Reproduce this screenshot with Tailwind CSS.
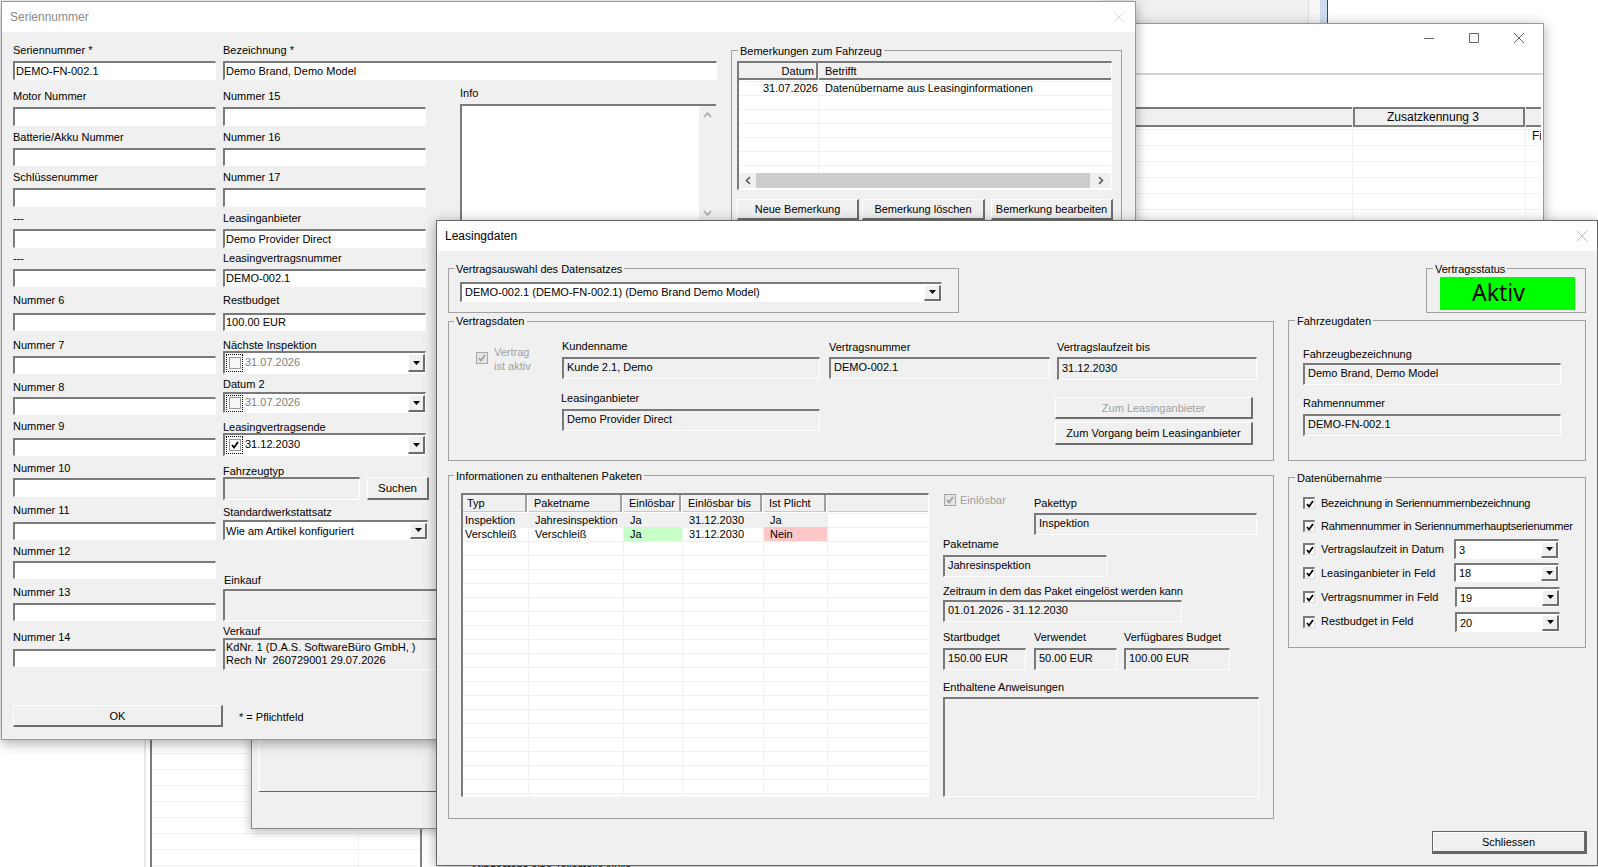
<!DOCTYPE html>
<html lang="de">
<head>
<meta charset="UTF-8">
<title>Leasingdaten</title>
<script src="https://cdn.jsdelivr.net/npm/@tailwindcss/browser@4"></script>
</head>
<body class="bg-white">
<div class="relative w-[1598px] h-[867px] overflow-hidden bg-white text-[11px] leading-[14px] text-black font-['Liberation_Sans',sans-serif]">

  <!-- main app behind everything -->
  <div class="absolute left-[144px] top-[700px] w-[278px] h-[167px] border-l-2 border-r-2 border-l-[#e8e8e8] border-r-[#808080] pl-[4px]">
    <div class="h-full border-l-2 border-[#7a7a7a] flex bg-[repeating-linear-gradient(to_bottom,transparent_0,transparent_5px,#f0f0f0_5px,#f0f0f0_6px,transparent_6px,transparent_16px)]">
      <div class="w-[207px] border-r border-[#f0f0f0]"></div>
    </div>
  </div>
  <div class="absolute left-[1100px] top-0 w-[228px] h-[30px] flex bg-[#f0f0f0] border-r border-[#444]">
    <div class="w-[209px] border-r border-[#ddd]"></div>
    <div class="w-[11px] bg-[#f6f6f6]"></div>
    <div class="w-[7px] bg-[#cfdcef]"></div>
  </div>
  <div class="absolute left-[472px] top-[864px] w-[170px] h-[3px] overflow-hidden whitespace-nowrap leading-[8px]">Mindestens eine Teilestelle Nulls</div>

  <!-- window behind, right -->
  <div class="absolute left-[1100px] top-[23px] w-[444px] h-[300px] bg-white border border-[#999] shadow-[0_2px_12px_rgba(0,0,0,0.3)]">
    <div class="h-[51px] border-b-2 border-[#d4d4d4] flex items-start justify-end gap-[35px] pr-[19px] pt-[9px]">
      <svg class="w-[10px] h-[10px]" viewBox="0 0 10 10"><path d="M0 5.5h10" stroke="#666"/></svg>
      <svg class="w-[10px] h-[10px]" viewBox="0 0 10 10"><path d="M.5.5h9v9h-9z" fill="none" stroke="#666"/></svg>
      <svg class="w-[10px] h-[10px]" viewBox="0 0 10 10"><path d="M0 0l10 10M10 0L0 10" stroke="#666"/></svg>
    </div>
    <div class="mt-[32px] mr-[1px] flex h-[200px] bg-[repeating-linear-gradient(to_bottom,transparent_0,transparent_6px,#f0f0f0_6px,#f0f0f0_7px,transparent_7px,transparent_16px)]">
      <div class="w-[252px] border-r border-[#f0f0f0]">
        <div class="h-[20px] bg-[#f0f0f0] border-t-2 border-b-2 border-[#7a7a7a]"></div>
      </div>
      <div class="w-[173px] border-r border-[#f0f0f0]">
        <div class="h-[20px] bg-[#f0f0f0] border-t-2 border-b-2 border-[#7a7a7a] border-l-2 border-r-2 flex items-center justify-center pr-[12px] text-[12px]">Zusatzkennung 3</div>
      </div>
      <div class="w-[15px] overflow-hidden">
        <div class="h-[20px] bg-[#f0f0f0] border-t-2 border-b-2 border-[#7a7a7a]"></div>
        <div class="pl-[6px] pt-[2px] text-[12px] text-[#300]">Fi</div>
      </div>
    </div>
  </div>

  <!-- window behind, middle -->
  <div class="absolute left-[251px] top-[600px] w-[400px] h-[229px] bg-[#f0f0f0] border border-[#888] shadow-[0_2px_10px_rgba(0,0,0,0.3)] pl-[6px]">
    <div class="h-[191px] border-l-2 border-b border-l-[#fafafa] border-b-[#666]"></div>
  </div>

  <!-- Seriennummer -->
  <div class="absolute left-[1px] top-[1px] w-[1135px] h-[739px] bg-[#f0f0f0] border border-[#999] shadow-[0_3px_12px_rgba(0,0,0,0.35)]">
    <div class="h-[30px] bg-white flex items-center justify-between pl-[8px] pr-[11px] text-[12px] text-[#8a8a8a]">
      <span>Seriennummer</span>
      <svg class="w-[10px] h-[10px]" viewBox="0 0 10 10"><path d="M0 0l10 10M10 0L0 10" stroke="#ddd"/></svg>
    </div>
    <div class="flex h-[638px] pl-[11px]">
      <!-- column 1 -->
      <div class="w-[210px] pt-[11px]">
        <div>Seriennummer *</div>
        <div class="mt-[4px] h-[19px] w-[203px] flex items-center pl-[1px] pb-px bg-white border-t-2 border-l-2 border-r border-b border-t-[#7a7a7a] border-l-[#7a7a7a] border-r-white border-b-white">DEMO-FN-002.1</div>
        <div class="mt-[9px]">Motor Nummer</div>
        <div class="mt-[4px] h-[19px] w-[203px] bg-white border-t-2 border-l-2 border-r border-b border-t-[#7a7a7a] border-l-[#7a7a7a] border-r-white border-b-white"></div>
        <div class="mt-[4px]">Batterie/Akku Nummer</div>
        <div class="mt-[4px] h-[18px] w-[203px] bg-white border-t-2 border-l-2 border-r border-b border-t-[#7a7a7a] border-l-[#7a7a7a] border-r-white border-b-white"></div>
        <div class="mt-[4px]">Schlüssenummer</div>
        <div class="mt-[4px] h-[19px] w-[203px] bg-white border-t-2 border-l-2 border-r border-b border-t-[#7a7a7a] border-l-[#7a7a7a] border-r-white border-b-white"></div>
        <div class="mt-[4px]">---</div>
        <div class="mt-[4px] h-[19px] w-[203px] bg-white border-t-2 border-l-2 border-r border-b border-t-[#7a7a7a] border-l-[#7a7a7a] border-r-white border-b-white"></div>
        <div class="mt-[3px]">---</div>
        <div class="mt-[4px] h-[18px] w-[203px] bg-white border-t-2 border-l-2 border-r border-b border-t-[#7a7a7a] border-l-[#7a7a7a] border-r-white border-b-white"></div>
        <div class="mt-[6px]">Nummer 6</div>
        <div class="mt-[6px] h-[18px] w-[203px] bg-white border-t-2 border-l-2 border-r border-b border-t-[#7a7a7a] border-l-[#7a7a7a] border-r-white border-b-white"></div>
        <div class="mt-[7px]">Nummer 7</div>
        <div class="mt-[4px] h-[18px] w-[203px] bg-white border-t-2 border-l-2 border-r border-b border-t-[#7a7a7a] border-l-[#7a7a7a] border-r-white border-b-white"></div>
        <div class="mt-[6px]">Nummer 8</div>
        <div class="mt-[3px] h-[18px] w-[203px] bg-white border-t-2 border-l-2 border-r border-b border-t-[#7a7a7a] border-l-[#7a7a7a] border-r-white border-b-white"></div>
        <div class="mt-[4px]">Nummer 9</div>
        <div class="mt-[5px] h-[18px] w-[203px] bg-white border-t-2 border-l-2 border-r border-b border-t-[#7a7a7a] border-l-[#7a7a7a] border-r-white border-b-white"></div>
        <div class="mt-[5px]">Nummer 10</div>
        <div class="mt-[3px] h-[19px] w-[203px] bg-white border-t-2 border-l-2 border-r border-b border-t-[#7a7a7a] border-l-[#7a7a7a] border-r-white border-b-white"></div>
        <div class="mt-[6px]">Nummer 11</div>
        <div class="mt-[5px] h-[18px] w-[203px] bg-white border-t-2 border-l-2 border-r border-b border-t-[#7a7a7a] border-l-[#7a7a7a] border-r-white border-b-white"></div>
        <div class="mt-[4px]">Nummer 12</div>
        <div class="mt-[3px] h-[18px] w-[203px] bg-white border-t-2 border-l-2 border-r border-b border-t-[#7a7a7a] border-l-[#7a7a7a] border-r-white border-b-white"></div>
        <div class="mt-[6px]">Nummer 13</div>
        <div class="mt-[4px] h-[18px] w-[203px] bg-white border-t-2 border-l-2 border-r border-b border-t-[#7a7a7a] border-l-[#7a7a7a] border-r-white border-b-white"></div>
        <div class="mt-[9px]">Nummer 14</div>
        <div class="mt-[5px] h-[18px] w-[203px] bg-white border-t-2 border-l-2 border-r border-b border-t-[#7a7a7a] border-l-[#7a7a7a] border-r-white border-b-white"></div>
        <div class="mt-[38px] flex items-center w-[340px]">
          <button class="w-[210px] h-[22px] bg-[#f0f0f0] border-t border-l border-t-white border-l-white border-r-2 border-b-2 border-r-[#6e6e6e] border-b-[#6e6e6e]">OK</button>
          <span class="ml-[16px] mt-[2px]">* = Pflichtfeld</span>
        </div>
      </div>
      <!-- column 2 and info -->
      <div class="w-[508px] pt-[11px]">
        <div>Bezeichnung *</div>
        <div class="mt-[4px] h-[19px] w-[494px] flex items-center pl-[1px] pb-px bg-white border-t-2 border-l-2 border-r border-b border-t-[#7a7a7a] border-l-[#7a7a7a] border-r-white border-b-white">Demo Brand, Demo Model</div>
        <div class="flex">
          <div class="w-[237px]">
            <div class="mt-[9px]">Nummer 15</div>
            <div class="mt-[4px] h-[19px] w-[203px] bg-white border-t-2 border-l-2 border-r border-b border-t-[#7a7a7a] border-l-[#7a7a7a] border-r-white border-b-white"></div>
            <div class="mt-[4px]">Nummer 16</div>
            <div class="mt-[4px] h-[18px] w-[203px] bg-white border-t-2 border-l-2 border-r border-b border-t-[#7a7a7a] border-l-[#7a7a7a] border-r-white border-b-white"></div>
            <div class="mt-[4px]">Nummer 17</div>
            <div class="mt-[4px] h-[19px] w-[203px] bg-white border-t-2 border-l-2 border-r border-b border-t-[#7a7a7a] border-l-[#7a7a7a] border-r-white border-b-white"></div>
            <div class="mt-[4px]">Leasinganbieter</div>
            <div class="mt-[4px] h-[19px] w-[203px] flex items-center pl-[1px] pb-px bg-white border-t-2 border-l-2 border-r border-b border-t-[#7a7a7a] border-l-[#7a7a7a] border-r-white border-b-white">Demo Provider Direct</div>
            <div class="mt-[3px]">Leasingvertragsnummer</div>
            <div class="mt-[4px] h-[18px] w-[203px] flex items-center pl-[1px] pb-px bg-white border-t-2 border-l-2 border-r border-b border-t-[#7a7a7a] border-l-[#7a7a7a] border-r-white border-b-white">DEMO-002.1</div>
            <div class="mt-[6px]">Restbudget</div>
            <div class="mt-[6px] h-[18px] w-[203px] flex items-center pl-[1px] pb-[2px] bg-white border-t-2 border-l-2 border-r border-b border-t-[#7a7a7a] border-l-[#7a7a7a] border-r-white border-b-white">100.00 EUR</div>
            <div class="mt-[7px]">Nächste Inspektion</div>
            <div class="-mt-px h-[23px] w-[203px] flex items-center bg-white border-t-2 border-l-2 border-r border-b border-t-[#7a7a7a] border-l-[#7a7a7a] border-r-white border-b-white text-[#808080]">
              <span class="ml-[1px] w-[17px] h-[18px] -mt-px flex items-center justify-center border border-dotted border-black"><span class="w-[12px] h-[12px] border border-[#999] bg-[#f8f8f8]"></span></span>
              <span class="ml-[2px] -mt-[3px] flex-1">31.07.2026</span>
              <span class="w-[17px] h-[18px] flex items-center justify-center bg-[#f0f0f0] border-t border-l border-t-white border-l-white border-r-2 border-b-2 border-r-[#6e6e6e] border-b-[#6e6e6e]"><svg class="w-[7px] h-[4px]" viewBox="0 0 7 4"><path d="M0 0h7L3.5 4z"/></svg></span>
            </div>
            <div class="mt-[3px]">Datum 2</div>
            <div class="mt-[1px] h-[21px] w-[203px] flex items-center bg-white border-t-2 border-l-2 border-r border-b border-t-[#7a7a7a] border-l-[#7a7a7a] border-r-white border-b-white text-[#808080]">
              <span class="ml-[1px] w-[17px] h-[17px] flex items-center justify-center border border-dotted border-black"><span class="w-[12px] h-[12px] border border-[#999] bg-[#f8f8f8]"></span></span>
              <span class="ml-[2px] -mt-[3px] flex-1">31.07.2026</span>
              <span class="w-[17px] h-[17px] flex items-center justify-center bg-[#f0f0f0] border-t border-l border-t-white border-l-white border-r-2 border-b-2 border-r-[#6e6e6e] border-b-[#6e6e6e]"><svg class="w-[7px] h-[4px]" viewBox="0 0 7 4"><path d="M0 0h7L3.5 4z"/></svg></span>
            </div>
            <div class="mt-[7px]">Leasingvertragsende</div>
            <div class="-mt-px h-[23px] w-[203px] flex items-center bg-white border-t-2 border-l-2 border-r border-b border-t-[#7a7a7a] border-l-[#7a7a7a] border-r-white border-b-white">
              <span class="ml-[1px] w-[17px] h-[18px] -mt-px flex items-center justify-center border border-dotted border-black"><span class="w-[12px] h-[12px] flex items-center justify-center border border-[#999] bg-white"><svg class="w-[8px] h-[8px]" viewBox="0 0 8 8"><path d="M1 4l2 2.5L7 1" fill="none" stroke="#000" stroke-width="1.8"/></svg></span></span>
              <span class="ml-[2px] -mt-[3px] flex-1">31.12.2030</span>
              <span class="w-[17px] h-[18px] flex items-center justify-center bg-[#f0f0f0] border-t border-l border-t-white border-l-white border-r-2 border-b-2 border-r-[#6e6e6e] border-b-[#6e6e6e]"><svg class="w-[7px] h-[4px]" viewBox="0 0 7 4"><path d="M0 0h7L3.5 4z"/></svg></span>
            </div>
            <div class="mt-[8px]">Fahrzeugtyp</div>
            <div class="-mt-px flex w-[207px] gap-[7px]">
              <div class="h-[23px] w-[137px] bg-[#f0f0f0] border-t-2 border-l-2 border-r border-b border-t-[#7a7a7a] border-l-[#7a7a7a] border-r-white border-b-white"></div>
              <button class="w-[62px] h-[23px] shrink-0 text-[11.5px] bg-[#f0f0f0] border-t border-l border-t-white border-l-white border-r-2 border-b-2 border-r-[#6e6e6e] border-b-[#6e6e6e]">Suchen</button>
            </div>
            <div class="mt-[5px]">Standardwerkstattsatz</div>
            <div class="mt-[1px] h-[20px] w-[205px] flex items-center justify-between pl-[1px] bg-white border-t-2 border-l-2 border-r border-b border-t-[#7a7a7a] border-l-[#7a7a7a] border-r-white border-b-white">
              <span>Wie am Artikel konfiguriert</span>
              <span class="w-[17px] h-[16px] flex items-center justify-center bg-[#f0f0f0] border-t border-l border-t-white border-l-white border-r-2 border-b-2 border-r-[#6e6e6e] border-b-[#6e6e6e]"><svg class="w-[7px] h-[4px]" viewBox="0 0 7 4"><path d="M0 0h7L3.5 4z"/></svg></span>
            </div>
            <div class="mt-[33px] pl-[1px]">Einkauf</div>
            <div class="mt-[2px] h-[32px] w-[230px] border-t-2 border-l-2 border-r border-b border-t-[#7a7a7a] border-l-[#7a7a7a] border-b-white border-r-white"></div>
            <div class="mt-[3px]">Verkauf</div>
            <div class="h-[32px] w-[230px] pl-[1px] pt-[1px] leading-[13px] whitespace-pre border-t-2 border-l-2 border-r border-b border-t-[#7a7a7a] border-l-[#7a7a7a] border-b-white border-r-white">KdNr. 1 (D.A.S. SoftwareBüro GmbH, )
Rech Nr  260729001 29.07.2026</div>
          </div>
          <div class="w-[256px] flex-none">
            <div class="mt-[6px]">Info</div>
            <div class="mt-[4px] h-[117px] flex justify-end bg-white border-t-2 border-l-2 border-t-[#7a7a7a] border-l-[#7a7a7a]">
              <div class="w-[17px] bg-[#f0f0f0] flex flex-col items-center justify-between pt-[6px] pb-[5px]">
                <svg class="w-[9px] h-[6px]" viewBox="0 0 9 6"><path d="M1 5l3.5-4L8 5" fill="none" stroke="#a6a6a6" stroke-width="1.5"/></svg>
                <svg class="w-[9px] h-[6px]" viewBox="0 0 9 6"><path d="M1 1l3.5 4L8 1" fill="none" stroke="#a6a6a6" stroke-width="1.5"/></svg>
              </div>
            </div>
          </div>
        </div>
      </div>
      <!-- Bemerkungen -->
      <div class="w-[391px] h-[200px] mt-[18px] relative border border-[#a0a0a0] pl-[5px] pt-[10px]">
        <div class="absolute left-[6px] -top-[7px] px-[2px] bg-[#f0f0f0]">Bemerkungen zum Fahrzeug</div>
        <div class="w-[375px] h-[129px] border-t-2 border-l-2 border-r border-b border-t-[#7a7a7a] border-l-[#7a7a7a] border-r-white border-b-white bg-white">
          <div class="flex h-[110px] overflow-hidden bg-[repeating-linear-gradient(to_bottom,transparent_0,transparent_4px,#f0f0f0_4px,#f0f0f0_5px,transparent_5px,transparent_14px)]">
            <div class="w-[80px] border-r border-[#f0f0f0]">
              <div class="h-[17px] bg-[#f0f0f0] border-b-2 border-r-2 border-[#7a7a7a] flex items-center justify-end pr-[2px]">Datum</div>
              <div class="h-[15px] flex items-center justify-end">31.07.2026</div>
            </div>
            <div class="flex-1">
              <div class="h-[17px] bg-[#f0f0f0] border-b-2 border-[#7a7a7a] flex items-center pl-[6px]">Betrifft</div>
              <div class="h-[15px] flex items-center pl-[6px]">Datenübername aus Leasinginformationen</div>
            </div>
          </div>
          <div class="h-[15px] flex items-center bg-[#f0f0f0]">
            <span class="w-[17px] flex justify-center"><svg class="w-[6px] h-[9px]" viewBox="0 0 6 9"><path d="M5 1L1.5 4.5 5 8" fill="none" stroke="#555" stroke-width="1.5"/></svg></span>
            <span class="flex-1 h-full bg-[#cdcdcd]"></span>
            <span class="w-[21px] flex justify-center"><svg class="w-[6px] h-[9px]" viewBox="0 0 6 9"><path d="M1 1l3.5 3.5L1 8" fill="none" stroke="#555" stroke-width="1.5"/></svg></span>
          </div>
        </div>
        <div class="mt-[9px] flex">
          <button class="w-[122px] h-[21px] bg-[#f0f0f0] border-t border-l border-t-white border-l-white border-r-2 border-b-2 border-r-[#6e6e6e] border-b-[#6e6e6e]">Neue Bemerkung</button>
          <button class="ml-[3px] w-[123px] h-[21px] bg-[#f0f0f0] border-t border-l border-t-white border-l-white border-r-2 border-b-2 border-r-[#6e6e6e] border-b-[#6e6e6e]">Bemerkung löschen</button>
          <button class="ml-[6px] w-[122px] h-[21px] bg-[#f0f0f0] border-t border-l border-t-white border-l-white border-r-2 border-b-2 border-r-[#6e6e6e] border-b-[#6e6e6e]">Bemerkung bearbeiten</button>
        </div>
      </div>
    </div>
  </div>

  <!-- Leasingdaten -->
  <div class="absolute left-[436px] top-[220px] w-[1162px] h-[646px] bg-[#f0f0f0] border border-[#666] shadow-[0_2px_12px_rgba(0,0,0,0.35)]">
    <div class="h-[30px] bg-white flex items-center justify-between pl-[8px] pr-[10px] text-[12px]">
      <span>Leasingdaten</span>
      <svg class="w-[10px] h-[10px]" viewBox="0 0 10 10"><path d="M0 0l10 10M10 0L0 10" stroke="#bbb"/></svg>
    </div>
    <div class="flex pl-[11px] pt-[17px] gap-[14px]">
      <!-- left side -->
      <div class="w-[826px]">
        <div class="relative w-[511px] h-[45px] border border-[#a0a0a0] pl-[11px] pt-[13px]">
          <div class="absolute left-[5px] -top-[7px] px-[2px] bg-[#f0f0f0]">Vertragsauswahl des Datensatzes</div>
          <div class="w-[482px] h-[20px] flex items-center justify-between pl-[3px] bg-white border-t-2 border-l-2 border-r border-b border-t-[#7a7a7a] border-l-[#7a7a7a] border-r-white border-b-white">
            <span class="-mt-px">DEMO-002.1 (DEMO-FN-002.1) (Demo Brand Demo Model)</span>
            <span class="w-[17px] h-[16px] flex items-center justify-center bg-[#f0f0f0] border-t border-l border-t-white border-l-white border-r-2 border-b-2 border-r-[#6e6e6e] border-b-[#6e6e6e]"><svg class="w-[7px] h-[4px]" viewBox="0 0 7 4"><path d="M0 0h7L3.5 4z"/></svg></span>
          </div>
        </div>

        <div class="relative mt-[8px] h-[140px] border border-[#a0a0a0] flex items-start">
          <div class="absolute left-[5px] -top-[8px] px-[2px] bg-[#f0f0f0]">Vertragsdaten</div>
          <div class="w-[113px] pl-[27px] pt-[30px] flex items-start gap-[6px] text-[#a0a0a0]">
            <span class="w-[12px] h-[12px] shrink-0 flex items-center justify-center border border-[#a8a8a8] bg-[#e4e4e4]"><svg class="w-[8px] h-[8px]" viewBox="0 0 8 8"><path d="M1 4l2 2.5L7 1" fill="none" stroke="#a0a0a0" stroke-width="1.8"/></svg></span>
            <span class="-mt-[7px] whitespace-nowrap">Vertrag<br>ist aktiv</span>
          </div>
          <div class="w-[258px] pt-[17px]">
            <div>Kundenname</div>
            <div class="mt-[4px] h-[22px] flex items-center pl-[3px] pb-[3px] border-t-2 border-l-2 border-r border-b border-t-[#7a7a7a] border-l-[#7a7a7a] border-r-white border-b-white">Kunde 2.1, Demo</div>
            <div class="mt-[12px] -ml-px">Leasinganbieter</div>
            <div class="mt-[4px] h-[22px] flex items-center pl-[3px] pb-[3px] border-t-2 border-l-2 border-r border-b border-t-[#7a7a7a] border-l-[#7a7a7a] border-r-white border-b-white">Demo Provider Direct</div>
          </div>
          <div class="ml-[9px] w-[221px] pt-[18px]">
            <div>Vertragsnummer</div>
            <div class="mt-[3px] h-[22px] flex items-center pl-[3px] pb-[3px] border-t-2 border-l-2 border-r border-b border-t-[#7a7a7a] border-l-[#7a7a7a] border-r-white border-b-white">DEMO-002.1</div>
          </div>
          <div class="ml-[7px] w-[200px] pt-[18px]">
            <div>Vertragslaufzeit bis</div>
            <div class="mt-[3px] h-[23px] flex items-center pl-[3px] pb-[3px] border-t-2 border-l-2 border-r border-b border-t-[#7a7a7a] border-l-[#7a7a7a] border-r-white border-b-white">31.12.2030</div>
            <button class="block mt-[17px] -ml-[2px] w-[198px] h-[22px] text-[#a0a0a0] bg-[#f0f0f0] border-t border-l border-t-white border-l-white border-r-2 border-b-2 border-r-[#6e6e6e] border-b-[#6e6e6e]">Zum Leasinganbieter</button>
            <button class="block mt-[3px] -ml-[2px] w-[198px] h-[23px] bg-[#f0f0f0] border-t border-l border-t-white border-l-white border-r-2 border-b-2 border-r-[#6e6e6e] border-b-[#6e6e6e]">Zum Vorgang beim Leasinganbieter</button>
          </div>
        </div>

        <div class="relative mt-[14px] h-[344px] border border-[#a0a0a0] flex items-start">
          <div class="absolute left-[5px] -top-[7px] px-[2px] bg-[#f0f0f0]">Informationen zu enthaltenen Paketen</div>
          <!-- packages table -->
          <div class="ml-[12px] mt-[17px] w-[468px] h-[304px] bg-white border-t-2 border-l-2 border-r border-b border-t-[#7a7a7a] border-l-[#7a7a7a] border-r-white border-b-white flex bg-[repeating-linear-gradient(to_bottom,transparent_0,transparent_4px,#f0f0f0_4px,#f0f0f0_5px,transparent_5px,transparent_14px)]">
            <div class="w-[66px] border-r border-[#f0f0f0]">
              <div class="h-[17px] mr-px bg-[#f0f0f0] border-r-2 border-b border-r-[#a0a0a0] border-b-[#c8c8c8] flex items-center pl-[4px]">Typ</div>
              <div class="mt-px h-[14px] bg-[#f0f0f0] flex items-center pl-[2px]">Inspektion</div>
              <div class="h-[14px] flex items-center pl-[2px]">Verschleiß</div>
            </div>
            <div class="w-[95px] border-r border-[#f0f0f0]">
              <div class="h-[17px] mr-px bg-[#f0f0f0] border-r-2 border-b border-r-[#a0a0a0] border-b-[#c8c8c8] flex items-center pl-[5px]">Paketname</div>
              <div class="mt-px h-[14px] bg-[#f0f0f0] flex items-center pl-[6px]">Jahresinspektion</div>
              <div class="h-[14px] flex items-center pl-[6px]">Verschleiß</div>
            </div>
            <div class="w-[59px] border-r border-[#f0f0f0]">
              <div class="h-[17px] mr-px bg-[#f0f0f0] border-r-2 border-b border-r-[#a0a0a0] border-b-[#c8c8c8] flex items-center pl-[5px]">Einlösbar</div>
              <div class="mt-px h-[14px] bg-[#f0f0f0] flex items-center pl-[6px]">Ja</div>
              <div class="h-[14px] bg-[#c8ffc8] flex items-center pl-[6px]">Ja</div>
            </div>
            <div class="w-[81px] border-r border-[#f0f0f0]">
              <div class="h-[17px] mr-px bg-[#f0f0f0] border-r-2 border-b border-r-[#a0a0a0] border-b-[#c8c8c8] flex items-center pl-[5px]">Einlösbar bis</div>
              <div class="mt-px h-[14px] bg-[#f0f0f0] flex items-center pl-[6px]">31.12.2030</div>
              <div class="h-[14px] flex items-center pl-[6px]">31.12.2030</div>
            </div>
            <div class="w-[64px] border-r border-[#f0f0f0]">
              <div class="h-[17px] mr-px bg-[#f0f0f0] border-r-2 border-b border-r-[#a0a0a0] border-b-[#c8c8c8] flex items-center pl-[5px]">Ist Plicht</div>
              <div class="mt-px h-[14px] bg-[#f0f0f0] flex items-center pl-[6px]">Ja</div>
              <div class="h-[14px] bg-[#ffc8c8] flex items-center pl-[6px]">Nein</div>
            </div>
            <div class="flex-1">
              <div class="h-[17px] bg-[#f0f0f0] border-b border-[#c8c8c8]"></div>
            </div>
          </div>
          <!-- package details -->
          <div class="ml-[14px] w-[316px]">
            <div class="flex">
              <div class="w-[91px] pl-[1px] pt-[18px] flex items-start gap-[4px] text-[#a0a0a0]">
                <span class="w-[12px] h-[12px] shrink-0 flex items-center justify-center border border-[#a8a8a8] bg-[#e4e4e4]"><svg class="w-[8px] h-[8px]" viewBox="0 0 8 8"><path d="M1 4l2 2.5L7 1" fill="none" stroke="#a0a0a0" stroke-width="1.8"/></svg></span>
                <span class="-mt-px">Einlösbar</span>
              </div>
              <div class="pt-[20px]">
                <div>Pakettyp</div>
                <div class="mt-[3px] h-[22px] w-[223px] flex items-center pl-[3px] pb-[3px] border-t-2 border-l-2 border-r border-b border-t-[#7a7a7a] border-l-[#7a7a7a] border-r-white border-b-white">Inspektion</div>
              </div>
            </div>
            <div class="mt-[2px]">Paketname</div>
            <div class="mt-[4px] h-[22px] w-[164px] flex items-center pl-[3px] pb-[3px] border-t-2 border-l-2 border-r border-b border-t-[#7a7a7a] border-l-[#7a7a7a] border-r-white border-b-white">Jahresinspektion</div>
            <div class="mt-[7px] tracking-[-0.1px]">Zeitraum in dem das Paket eingelöst werden kann</div>
            <div class="mt-[2px] h-[22px] w-[239px] flex items-center pl-[3px] pb-[3px] border-t-2 border-l-2 border-r border-b border-t-[#7a7a7a] border-l-[#7a7a7a] border-r-white border-b-white">01.01.2026 - 31.12.2030</div>
            <div class="mt-[8px] flex">
              <div class="w-[83px]">
                <div>Startbudget</div>
                <div class="mt-[4px] h-[22px] flex items-center pl-[3px] pb-[3px] border-t-2 border-l-2 border-r border-b border-t-[#7a7a7a] border-l-[#7a7a7a] border-r-white border-b-white">150.00 EUR</div>
              </div>
              <div class="ml-[8px] w-[83px]">
                <div>Verwendet</div>
                <div class="mt-[4px] h-[22px] flex items-center pl-[3px] pb-[3px] border-t-2 border-l-2 border-r border-b border-t-[#7a7a7a] border-l-[#7a7a7a] border-r-white border-b-white">50.00 EUR</div>
              </div>
              <div class="ml-[7px] w-[106px]">
                <div>Verfügbares Budget</div>
                <div class="mt-[4px] h-[22px] flex items-center pl-[3px] pb-[3px] border-t-2 border-l-2 border-r border-b border-t-[#7a7a7a] border-l-[#7a7a7a] border-r-white border-b-white">100.00 EUR</div>
              </div>
            </div>
            <div class="mt-[10px]">Enthaltene Anweisungen</div>
            <div class="mt-[3px] h-[100px] border-t-2 border-l-2 border-r border-b border-t-[#7a7a7a] border-l-[#7a7a7a] border-r-white border-b-white"></div>
          </div>
        </div>
      </div>

      <!-- right side -->
      <div class="w-[298px] flex flex-col">
        <div class="relative self-end w-[160px] h-[45px] border border-[#a0a0a0] pl-[13px] pt-[8px]">
          <div class="absolute left-[6px] -top-[7px] px-[2px] bg-[#f0f0f0]">Vertragsstatus</div>
          <div class="w-[135px] h-[33px] bg-[#00ff00] flex items-center justify-center pr-[18px] pb-[3px] text-[23px] font-['Noto_Sans',sans-serif]">Aktiv</div>
        </div>
        <div class="relative mt-[7px] h-[141px] border border-[#a0a0a0] pl-[14px] pt-[26px]">
          <div class="absolute left-[6px] -top-[7px] px-[2px] bg-[#f0f0f0]">Fahrzeugdaten</div>
          <div>Fahrzeugbezeichnung</div>
          <div class="mt-[2px] h-[22px] w-[258px] flex items-center pl-[3px] pb-[3px] border-t-2 border-l-2 border-r border-b border-t-[#7a7a7a] border-l-[#7a7a7a] border-r-white border-b-white">Demo Brand, Demo Model</div>
          <div class="mt-[11px]">Rahmennummer</div>
          <div class="mt-[4px] h-[22px] w-[258px] flex items-center pl-[3px] pb-[3px] border-t-2 border-l-2 border-r border-b border-t-[#7a7a7a] border-l-[#7a7a7a] border-r-white border-b-white">DEMO-FN-002.1</div>
        </div>
        <div class="relative mt-[16px] h-[171px] border border-[#a0a0a0] pl-[14px] pt-[16px]">
          <div class="absolute left-[6px] -top-[7px] px-[2px] bg-[#f0f0f0]">Datenübernahme</div>
          <div class="h-[18px] flex items-center gap-[6px]">
            <span class="w-[12px] h-[12px] flex items-center justify-center bg-white border-t-2 border-l-2 border-r border-b border-t-[#7a7a7a] border-l-[#7a7a7a] border-r-[#ddd] border-b-[#ddd]"><svg class="w-[8px] h-[8px]" viewBox="0 0 8 8"><path d="M1 4l2 2.5L7 1" fill="none" stroke="#000" stroke-width="1.8"/></svg></span>
            <span class="tracking-[-0.25px]">Bezeichnung in Seriennummernbezeichnung</span>
          </div>
          <div class="mt-[5px] h-[18px] flex items-center gap-[6px]">
            <span class="w-[12px] h-[12px] flex items-center justify-center bg-white border-t-2 border-l-2 border-r border-b border-t-[#7a7a7a] border-l-[#7a7a7a] border-r-[#ddd] border-b-[#ddd]"><svg class="w-[8px] h-[8px]" viewBox="0 0 8 8"><path d="M1 4l2 2.5L7 1" fill="none" stroke="#000" stroke-width="1.8"/></svg></span>
            <span class="whitespace-nowrap tracking-[-0.2px]">Rahmennummer in Seriennummerhauptserienummer</span>
          </div>
          <div class="mt-[4px] h-[20px] flex items-center gap-[6px]">
            <span class="w-[12px] h-[12px] flex items-center justify-center bg-white border-t-2 border-l-2 border-r border-b border-t-[#7a7a7a] border-l-[#7a7a7a] border-r-[#ddd] border-b-[#ddd]"><svg class="w-[8px] h-[8px]" viewBox="0 0 8 8"><path d="M1 4l2 2.5L7 1" fill="none" stroke="#000" stroke-width="1.8"/></svg></span>
            <span class="w-[127px]">Vertragslaufzeit in Datum</span>
            <div class="w-[105px] h-[20px] flex items-center justify-between pl-[3px] bg-white border-t-2 border-l-2 border-r border-b border-t-[#7a7a7a] border-l-[#7a7a7a] border-r-white border-b-white">
              <span>3</span>
              <span class="w-[17px] h-[16px] flex items-center justify-center bg-[#f0f0f0] border-t border-l border-t-white border-l-white border-r-2 border-b-2 border-r-[#6e6e6e] border-b-[#6e6e6e]"><svg class="w-[7px] h-[4px]" viewBox="0 0 7 4"><path d="M0 0h7L3.5 4z"/></svg></span>
            </div>
          </div>
          <div class="mt-[4px] h-[19px] flex items-center gap-[6px]">
            <span class="w-[12px] h-[12px] flex items-center justify-center bg-white border-t-2 border-l-2 border-r border-b border-t-[#7a7a7a] border-l-[#7a7a7a] border-r-[#ddd] border-b-[#ddd]"><svg class="w-[8px] h-[8px]" viewBox="0 0 8 8"><path d="M1 4l2 2.5L7 1" fill="none" stroke="#000" stroke-width="1.8"/></svg></span>
            <span class="w-[127px]">Leasinganbieter in Feld</span>
            <div class="w-[105px] h-[19px] flex items-center justify-between pl-[3px] bg-white border-t-2 border-l-2 border-r border-b border-t-[#7a7a7a] border-l-[#7a7a7a] border-r-white border-b-white">
              <span>18</span>
              <span class="w-[17px] h-[15px] flex items-center justify-center bg-[#f0f0f0] border-t border-l border-t-white border-l-white border-r-2 border-b-2 border-r-[#6e6e6e] border-b-[#6e6e6e]"><svg class="w-[7px] h-[4px]" viewBox="0 0 7 4"><path d="M0 0h7L3.5 4z"/></svg></span>
            </div>
          </div>
          <div class="mt-[5px] h-[20px] flex items-center gap-[6px]">
            <span class="w-[12px] h-[12px] flex items-center justify-center bg-white border-t-2 border-l-2 border-r border-b border-t-[#7a7a7a] border-l-[#7a7a7a] border-r-[#ddd] border-b-[#ddd]"><svg class="w-[8px] h-[8px]" viewBox="0 0 8 8"><path d="M1 4l2 2.5L7 1" fill="none" stroke="#000" stroke-width="1.8"/></svg></span>
            <span class="w-[128px]">Vertragsnummer in Feld</span>
            <div class="w-[105px] h-[20px] flex items-center justify-between pl-[3px] bg-white border-t-2 border-l-2 border-r border-b border-t-[#7a7a7a] border-l-[#7a7a7a] border-r-white border-b-white">
              <span>19</span>
              <span class="w-[17px] h-[16px] flex items-center justify-center bg-[#f0f0f0] border-t border-l border-t-white border-l-white border-r-2 border-b-2 border-r-[#6e6e6e] border-b-[#6e6e6e]"><svg class="w-[7px] h-[4px]" viewBox="0 0 7 4"><path d="M0 0h7L3.5 4z"/></svg></span>
            </div>
          </div>
          <div class="mt-[5px] h-[20px] flex items-center gap-[6px]">
            <span class="w-[12px] h-[12px] flex items-center justify-center bg-white border-t-2 border-l-2 border-r border-b border-t-[#7a7a7a] border-l-[#7a7a7a] border-r-[#ddd] border-b-[#ddd]"><svg class="w-[8px] h-[8px]" viewBox="0 0 8 8"><path d="M1 4l2 2.5L7 1" fill="none" stroke="#000" stroke-width="1.8"/></svg></span>
            <span class="w-[128px] -mt-[2px]">Restbudget in Feld</span>
            <div class="w-[105px] h-[20px] flex items-center justify-between pl-[3px] bg-white border-t-2 border-l-2 border-r border-b border-t-[#7a7a7a] border-l-[#7a7a7a] border-r-white border-b-white">
              <span>20</span>
              <span class="w-[17px] h-[16px] flex items-center justify-center bg-[#f0f0f0] border-t border-l border-t-white border-l-white border-r-2 border-b-2 border-r-[#6e6e6e] border-b-[#6e6e6e]"><svg class="w-[7px] h-[4px]" viewBox="0 0 7 4"><path d="M0 0h7L3.5 4z"/></svg></span>
            </div>
          </div>
        </div>
        <button class="mt-[183px] -mr-px self-end w-[155px] h-[23px] bg-[#f0f0f0] border border-r-[3px] border-b-[3px] border-[#666] shadow-[inset_1px_1px_0_#fff]">Schliessen</button>
      </div>
    </div>
  </div>
</div>
</body>
</html>
